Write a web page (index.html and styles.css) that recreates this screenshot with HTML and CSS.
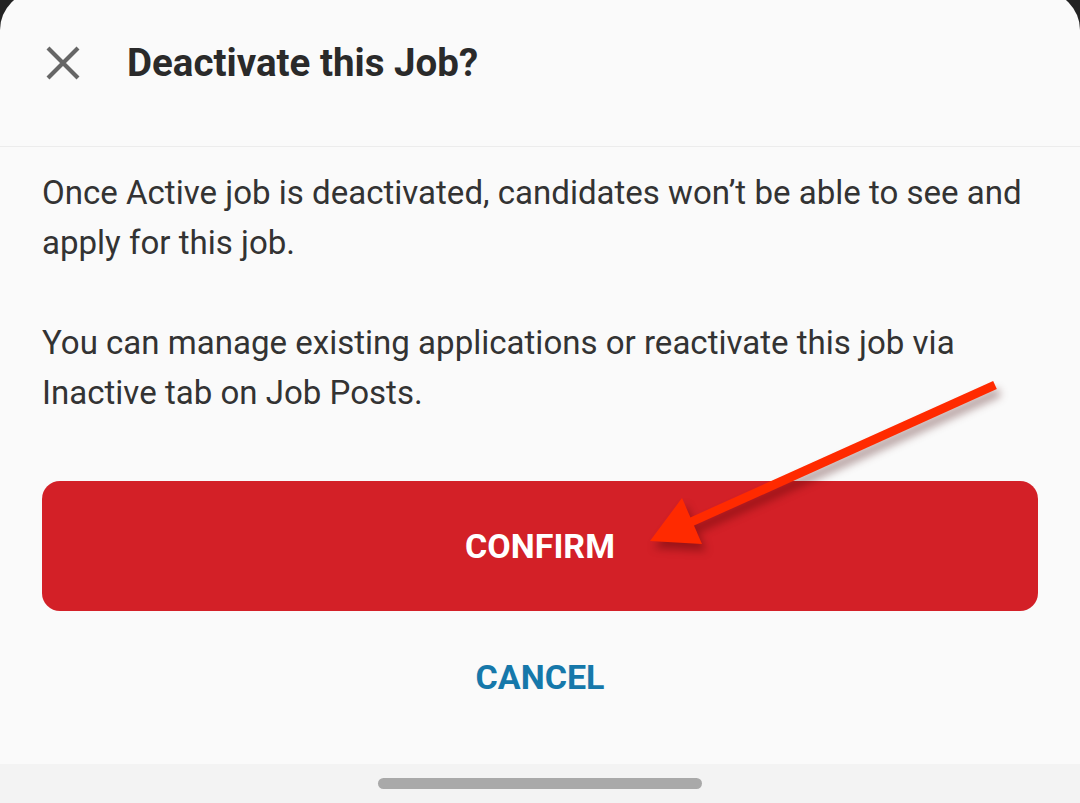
FILE: index.html
```html
<!DOCTYPE html>
<html lang="en">
<head>
<meta charset="utf-8">
<title>Deactivate this Job?</title>
<link rel="stylesheet" href="styles.css">
</head>
<body>
<div class="screen">
  <div class="sheet">
    <header class="header">
      <svg class="close" width="34" height="34" viewBox="0 0 34 34" aria-hidden="true">
        <path d="M2 2 L32 32 M32 2 L2 32" stroke="#666" stroke-width="4.2" stroke-linecap="butt" fill="none"/>
      </svg>
      <h1 class="title">Deactivate this Job?</h1>
    </header>
    <div class="content">
      <p class="para">Once Active job is deactivated, candidates won’t be able to see and apply for this job.</p>
      <p class="para">You can manage existing applications or reactivate this job via Inactive tab on Job Posts.</p>
      <button class="btn-confirm">CONFIRM</button>
      <button class="btn-cancel">CANCEL</button>
    </div>
  </div>
  <div class="navbar"><div class="handle"></div></div>
  <svg class="arrow" width="1080" height="803" viewBox="0 0 1080 803" aria-hidden="true">
    <g class="arrow-g">
      <line x1="995" y1="385" x2="680" y2="527" stroke="#ff2a00" stroke-width="9"/>
      <polygon points="650,541 682,498 702,544" fill="#ff2a00"/>
    </g>
  </svg>
</div>
</body>
</html>
```
FILE: styles.css
```css
html, body {
  margin: 0;
  padding: 0;
}
body {
  background: #232323;
  font-family: Roboto, "Liberation Sans", Arial, sans-serif;
  width: 1080px;
  height: 803px;
  overflow: hidden;
}
.screen {
  position: relative;
  width: 1080px;
  height: 803px;
  display: flex;
  flex-direction: column;
}
.sheet {
  margin-top: -9px;
  height: 773px;
  background: #fafafa;
  border-radius: 39px 39px 0 0;
  display: flex;
  flex-direction: column;
}
.header {
  box-sizing: border-box;
  height: 156px;
  padding: 9px 0 20px 46px;
  display: flex;
  align-items: center;
  border-bottom: 1px solid #ececec;
}
.close {
  flex: none;
  display: block;
}
.title {
  margin: 0 0 0 47px;
  font-size: 38.5px;
  font-weight: 700;
  color: #2a2a2a;
  line-height: 44px;
}
.content {
  padding: 21px 42px 0 42px;
  display: flex;
  flex-direction: column;
}
.para {
  margin: 0 0 50px 0;
  font-size: 33.05px;
  line-height: 50px;
  color: #333333;
}
.para + .para {
  margin-bottom: 0;
}
.btn-confirm {
  margin-top: 63px;
  height: 130px;
  border: none;
  border-radius: 18px;
  background: #d32027;
  color: #ffffff;
  font-family: Roboto, "Liberation Sans", Arial, sans-serif;
  font-size: 34px;
  font-weight: 700;
  padding: 0;
}
.btn-cancel {
  margin-top: 41px;
  height: 50px;
  border: none;
  background: transparent;
  color: #1678aa;
  font-family: Roboto, "Liberation Sans", Arial, sans-serif;
  font-size: 34px;
  font-weight: 700;
  padding: 0;
}
.navbar {
  flex: 1;
  background: #f3f3f3;
  display: flex;
  justify-content: center;
  padding-top: 14px;
  box-sizing: border-box;
}
.handle {
  width: 324px;
  height: 11px;
  border-radius: 6px;
  background: #a9a9a9;
}
.arrow {
  position: absolute;
  left: 0;
  top: 0;
  pointer-events: none;
}
.arrow-g {
  filter: drop-shadow(4px 7px 4px rgba(60, 0, 0, 0.38));
}
```
